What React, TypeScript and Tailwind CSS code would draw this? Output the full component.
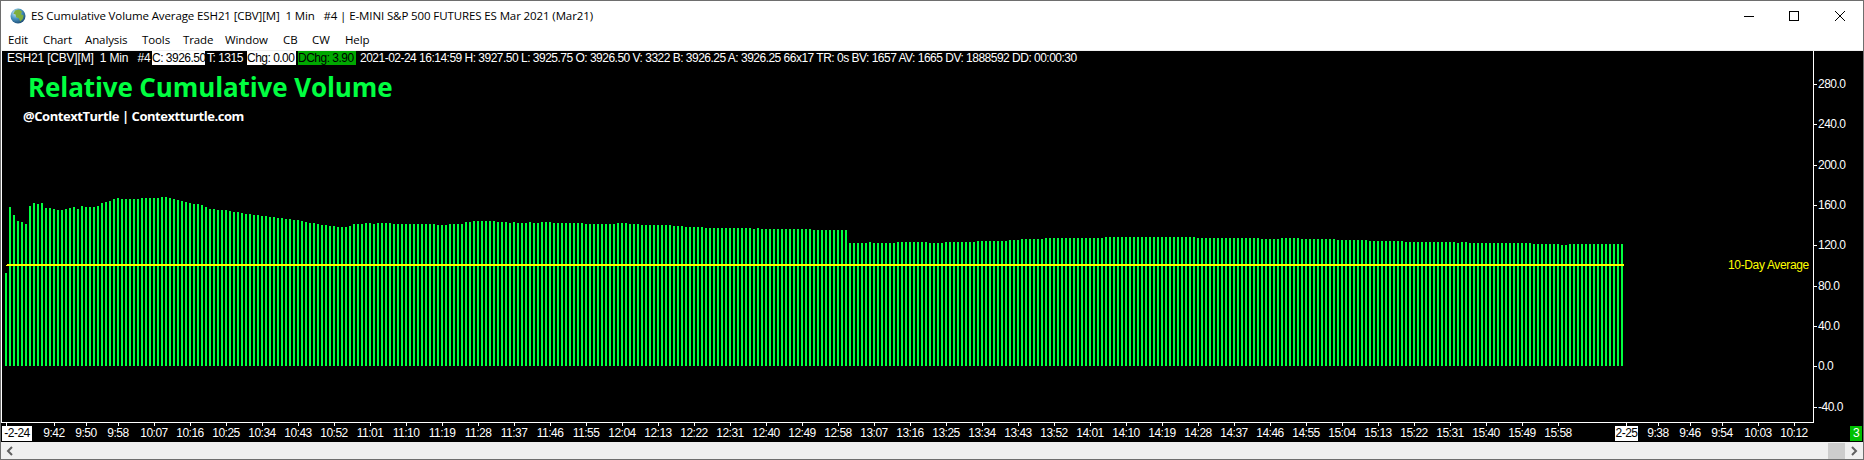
import React from 'react';

// bar tops in page px, run-length encoded as [top, count]
const topRuns: [number, number][] = [
  [273, 1], [207, 1], [215, 1], [221, 1], [222, 1], [224, 1], [206, 1], [203, 1], [204, 1], [203, 1],
  [208, 2], [209, 1], [210, 2], [209, 1], [208, 1], [207, 1], [209, 1], [206, 1], [207, 3], [206, 1],
  [203, 1], [202, 1], [201, 1], [199, 1], [198, 1], [199, 5], [198, 5], [197, 2], [198, 1], [199, 1], [200, 1],
  // x = 181
  [201, 1], [202, 1], [203, 1], [204, 2], [205, 1], [207, 1], [209, 2], [210, 3], [211, 1], [212, 2], [213, 1],
  [214, 2], [215, 2], [216, 2], [217, 2], [218, 2], [219, 2], [220, 2], [221, 1], [222, 1], [223, 2], [224, 1],
  [225, 2], [226, 2], [227, 3], [226, 1], [224, 3], [223, 2], [224, 1], [223, 4], [224, 11], [225, 3], [224, 4],
  [222, 2], [221, 6], [222, 3], [223, 1], [222, 1], [223, 3], [222, 1], [223, 2], [222, 3], [223, 7],
  // x = 581
  [223, 1], [224, 8], [223, 3], [224, 3], [225, 8], [226, 3], [227, 5], [228, 12], [229, 1], [228, 1], [229, 13],
  [230, 9], [243, 5], [242, 1], [243, 6], [242, 8], [243, 4], [242, 8], [241, 1],
  // x = 981
  [241, 7], [240, 3], [239, 6], [238, 15], [237, 23], [238, 16], [239, 5], [238, 5],
  // x = 1301
  [239, 9], [240, 8], [241, 9], [242, 13], [243, 1], [242, 2], [243, 16], [244, 7], [245, 2], [244, 14],
];
const tops = topRuns.flatMap(([top, n]) => Array<number>(n).fill(top));

const yTicks = [
  ['280.0', 84], ['240.0', 124], ['200.0', 165], ['160.0', 205], ['120.0', 245],
  ['80.0', 286], ['40.0', 326], ['0.0', 366], ['-40.0', 407],
] as const;

const timesA = ['9:42', '9:50', '9:58'];
const timesB = [
  '10:07', '10:16', '10:25', '10:34', '10:43', '10:52', '11:01', '11:10', '11:19', '11:28', '11:37', '11:46', '11:55',
  '12:04', '12:13', '12:22', '12:31', '12:40', '12:49', '12:58', '13:07', '13:16', '13:25', '13:34', '13:43', '13:52',
  '14:01', '14:10', '14:19', '14:28', '14:37', '14:46', '14:55', '15:04', '15:13', '15:22', '15:31', '15:40', '15:49', '15:58',
];
const xTicks: [string, number][] = [
  ...timesA.map((t, i): [string, number] => [t, 54 + i * 32]),
  ...timesB.map((t, i): [string, number] => [t, 154 + i * 36]),
  ['9:38', 1658], ['9:46', 1690], ['9:54', 1722], ['10:03', 1758], ['10:12', 1794],
];

const menu = [
  ['Edit', 'w-[35px]'], ['Chart', 'w-[42px]'], ['Analysis', 'w-[57px]'], ['Tools', 'w-[41px]'], ['Trade', 'w-[42px]'],
  ['Window', 'w-[58px]'], ['CB', 'w-[29px]'], ['CW', 'w-[33px]'], ['Help', 'w-[40px]'],
] as const;

function Globe() {
  return (
    <svg width="16" height="16" viewBox="0 0 16 16" className="shrink-0">
      <defs>
        <radialGradient id="sea" cx="35%" cy="30%" r="75%">
          <stop offset="0%" stopColor="#d5eef8" />
          <stop offset="50%" stopColor="#4a97c4" />
          <stop offset="100%" stopColor="#1c4a72" />
        </radialGradient>
      </defs>
      <circle cx="8" cy="8" r="7.5" fill="url(#sea)" />
      <path d="M5 2.5 9 1.6l3 2-1 2.6 2.6 1.4-.8 3.4-2.6 2.6-1.4-3.4-2.6-1-.6-2.6-2.2-.8z" fill="#7fae3c" />
    </svg>
  );
}

function StatusBar() {
  return (
    <div className="relative flex h-[14px] items-center whitespace-pre font-['Liberation_Sans',sans-serif] text-[12px] leading-[14px] tracking-[-0.51px] text-white">
      <span className="w-[151px] pl-[6px] tracking-[-0.2px]">ESH21 [CBV][M]  1 Min   #4</span>
      <span className="w-[53px] bg-white text-black">C: 3926.50</span>
      <span className="w-[42px] pl-[2px]">T: 1315</span>
      <span className="w-[49px] bg-white text-black">Chg: 0.00</span>
      <span className="ml-[2px] w-[58px] bg-[#00a800] text-black">DChg: 3.90</span>
      <span className="pl-[4px]">2021-02-24 16:14:59 H: 3927.50 L: 3925.75 O: 3926.50 V: 3322 B: 3926.25 A: 3926.25 66x17 TR: 0s BV: 1657 AV: 1665 DV: 1888592 DD: 00:00:30</span>
    </div>
  );
}

function Chart() {
  return (
    <div className="relative h-[391px] w-full overflow-hidden bg-black">
      <svg className="absolute inset-0" width="1862" height="391" viewBox="1 51 1862 391" shapeRendering="crispEdges">
        {tops.map((top, i) => (
          <rect key={i} x={5 + i * 4} y={top} width="2" height={366 - top} fill="#00ff40" />
        ))}
        <rect x="7" y="264" width="1617" height="2" fill="#ffff00" />
        <rect x="6" y="265" width="1" height="1" fill="#ffff00" />
        <rect x="1" y="51" width="1" height="372" fill="#ffffff" />
        <rect x="1813" y="51" width="1" height="372" fill="#ffffff" />
        <rect x="1" y="422" width="1813" height="1" fill="#ffffff" />
        {yTicks.map(([, y]) => (
          <rect key={y} x="1814" y={y} width="3" height="1" fill="#ffffff" />
        ))}
        {[6, ...xTicks.map(([, x]) => x), 1626].map((x) => (
          <rect key={x} x={x} y="423" width="1" height="3" fill="#ffffff" />
        ))}
      </svg>

      <StatusBar />

      <div className="absolute left-[27px] top-[19px] whitespace-nowrap font-['Open_Sans',sans-serif] text-[26px] font-bold leading-[34px] text-[#00ff40]">
        Relative Cumulative Volume
      </div>
      <div className="absolute left-[22px] top-[56px] whitespace-nowrap font-['Open_Sans',sans-serif] text-[13px] font-bold leading-[18px] tracking-[-0.45px] text-white">
        @ContextTurtle | Contextturtle.com
      </div>

      <div className="whitespace-nowrap font-['Liberation_Sans',sans-serif] text-[12px] leading-[14px] tracking-[-0.5px] text-white">
        {yTicks.map(([label, y]) => (
          <span key={label} className="absolute left-[1817px]" style={{ top: y - 58 }}>{label}</span>
        ))}
        {xTicks.map(([label, x]) => (
          <span key={label} className="absolute top-[375px] w-[40px] text-center" style={{ left: x - 21 }}>{label}</span>
        ))}
        <span className="absolute left-[1px] top-[375px] h-[15px] w-[30px] bg-white text-center text-black">-2-24</span>
        <span className="absolute left-[1614px] top-[375px] h-[15px] w-[23px] bg-white text-center text-black">2-25</span>
        <span className="absolute left-[1727px] top-[207px] tracking-[-0.35px] text-[#ffff00]">10-Day Average</span>
        <span className="absolute left-[1849px] top-[375px] h-[15px] w-[12px] bg-[#00c000] text-center">3</span>
      </div>
    </div>
  );
}

export default function App() {
  return (
    <div className="flex h-[460px] w-[1864px] flex-col overflow-hidden border border-[#6e6e6e] bg-white font-['Open_Sans',sans-serif] text-[11.5px] tracking-[-0.11px] text-black">
      <div className="flex h-[29px] items-center pl-[9px]">
        <Globe />
        <span className="ml-[5px] whitespace-pre">ES Cumulative Volume Average ESH21 [CBV][M]  1 Min   #4 | E-MINI S&amp;P 500 FUTURES ES Mar 2021 (Mar21)</span>
        <svg width="119" height="12" viewBox="0 0 119 12" className="ml-auto" shapeRendering="crispEdges" fill="none" stroke="#000">
          <path d="M0 6.5h10" />
          <rect x="45.5" y="1.5" width="9" height="9" />
          <path d="M91 1l10 10M101 1 91 11" shapeRendering="auto" />
        </svg>
      </div>
      <div className="flex h-[21px] items-center border-b border-[#f0f0f0] pl-[7px]">
        {menu.map(([label, w]) => (
          <span key={label} className={w}>{label}</span>
        ))}
      </div>
      <Chart />
      <div className="flex h-[17px] items-center justify-between bg-[#f0f0f0] pl-[5px]">
        <svg width="8" height="10" viewBox="0 0 8 10" fill="none" stroke="#606060" strokeWidth="2"><path d="M6 1 2 5l4 4" /></svg>
        <div className="flex items-center">
          <div className="h-[16px] w-[17px] bg-[#cdcdcd]" />
          <svg width="8" height="10" viewBox="0 0 8 10" fill="none" stroke="#606060" strokeWidth="2" className="mx-[5px]"><path d="M2 1l4 4-4 4" /></svg>
        </div>
      </div>
    </div>
  );
}
